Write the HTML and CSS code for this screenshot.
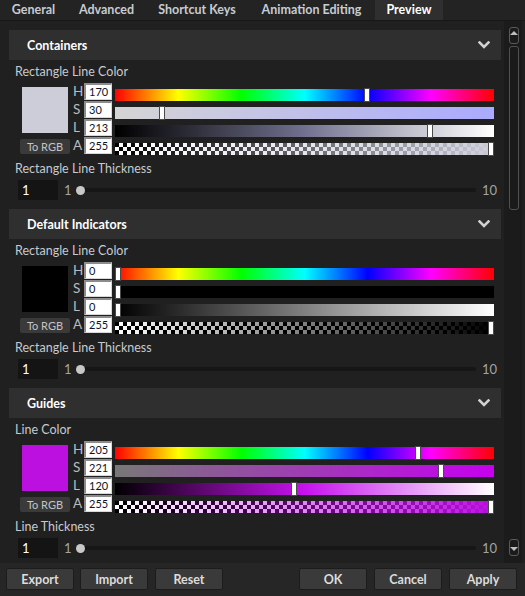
FILE: index.html
```html
<!DOCTYPE html>
<html>
<head>
<meta charset="utf-8">
<title>Preferences - Preview</title>
<link rel="stylesheet" href="styles.css">
</head>
<body>
<div class="window">
  <nav class="tabs">
    <div class="tab">General</div>
    <div class="tab">Advanced</div>
    <div class="tab">Shortcut Keys</div>
    <div class="tab">Animation Editing</div>
    <div class="tab active">Preview</div>
  </nav>
  <div class="main">
    <div class="content">
      <section class="section sec-containers">
        <header class="sec-head"><span>Containers</span><svg class="chev" viewBox="0 0 12 8" width="12" height="8"><polyline points="1.5,1.5 6,6 10.5,1.5"/></svg></header>
        <div class="sec-body">
          <div class="field-label">Rectangle Line Color</div>
          <div class="picker">
            <div class="preview-col">
              <div class="swatch"></div>
              <button class="to-rgb">To RGB</button>
            </div>
            <div class="channels">
              <div class="channel"><span class="ch-letter">H</span><span class="ch-input">170</span><div class="bar bar-h"><span class="thumb" style="left:248.7px"></span></div></div>
              <div class="channel"><span class="ch-letter">S</span><span class="ch-input">30</span><div class="bar bar-s"><span class="thumb" style="left:43.9px"></span></div></div>
              <div class="channel"><span class="ch-letter">L</span><span class="ch-input">213</span><div class="bar bar-l"><span class="thumb" style="left:311.6px"></span></div></div>
              <div class="channel"><span class="ch-letter">A</span><span class="ch-input">255</span><div class="bar bar-a"><span class="thumb" style="left:373px"></span></div></div>
            </div>
          </div>
          <div class="field-label gap">Rectangle Line Thickness</div>
          <div class="thickness">
            <div class="num-input">1</div>
            <span class="range-min">1</span>
            <div class="track"><span class="knob"></span></div>
            <span class="range-max">10</span>
          </div>
        </div>
      </section>

      <section class="section sec-indicators">
        <header class="sec-head"><span>Default Indicators</span><svg class="chev" viewBox="0 0 12 8" width="12" height="8"><polyline points="1.5,1.5 6,6 10.5,1.5"/></svg></header>
        <div class="sec-body">
          <div class="field-label">Rectangle Line Color</div>
          <div class="picker">
            <div class="preview-col">
              <div class="swatch"></div>
              <button class="to-rgb">To RGB</button>
            </div>
            <div class="channels">
              <div class="channel"><span class="ch-letter">H</span><span class="ch-input">0</span><div class="bar bar-h"><span class="thumb" style="left:0px"></span></div></div>
              <div class="channel"><span class="ch-letter">S</span><span class="ch-input">0</span><div class="bar bar-s"><span class="thumb" style="left:0px"></span></div></div>
              <div class="channel"><span class="ch-letter">L</span><span class="ch-input">0</span><div class="bar bar-l"><span class="thumb" style="left:0px"></span></div></div>
              <div class="channel"><span class="ch-letter">A</span><span class="ch-input">255</span><div class="bar bar-a"><span class="thumb" style="left:373px"></span></div></div>
            </div>
          </div>
          <div class="field-label gap">Rectangle Line Thickness</div>
          <div class="thickness">
            <div class="num-input">1</div>
            <span class="range-min">1</span>
            <div class="track"><span class="knob"></span></div>
            <span class="range-max">10</span>
          </div>
        </div>
      </section>

      <section class="section sec-guides">
        <header class="sec-head"><span>Guides</span><svg class="chev" viewBox="0 0 12 8" width="12" height="8"><polyline points="1.5,1.5 6,6 10.5,1.5"/></svg></header>
        <div class="sec-body">
          <div class="field-label">Line Color</div>
          <div class="picker">
            <div class="preview-col">
              <div class="swatch"></div>
              <button class="to-rgb">To RGB</button>
            </div>
            <div class="channels">
              <div class="channel"><span class="ch-letter">H</span><span class="ch-input">205</span><div class="bar bar-h"><span class="thumb" style="left:299.9px"></span></div></div>
              <div class="channel"><span class="ch-letter">S</span><span class="ch-input">221</span><div class="bar bar-s"><span class="thumb" style="left:323.3px"></span></div></div>
              <div class="channel"><span class="ch-letter">L</span><span class="ch-input">120</span><div class="bar bar-l"><span class="thumb" style="left:175.5px"></span></div></div>
              <div class="channel"><span class="ch-letter">A</span><span class="ch-input">255</span><div class="bar bar-a"><span class="thumb" style="left:373px"></span></div></div>
            </div>
          </div>
          <div class="field-label gap">Line Thickness</div>
          <div class="thickness">
            <div class="num-input">1</div>
            <span class="range-min">1</span>
            <div class="track"><span class="knob"></span></div>
            <span class="range-max">10</span>
          </div>
        </div>
      </section>
    </div>
    <div class="scrollbar">
      <div class="sb-btn sb-up"><svg viewBox="0 0 8 6" width="8" height="6"><polygon points="0,5 4,1 8,5"/></svg></div>
      <div class="sb-thumb"></div>
      <div class="sb-fill"></div>
      <div class="sb-btn sb-down"><svg viewBox="0 0 8 6" width="8" height="6"><polygon points="0,1 4,5 8,1"/></svg></div>
    </div>
  </div>
  <footer class="footer">
    <button class="btn">Export</button>
    <button class="btn">Import</button>
    <button class="btn">Reset</button>
    <div class="spacer"></div>
    <button class="btn">OK</button>
    <button class="btn">Cancel</button>
    <button class="btn">Apply</button>
  </footer>
</div>
</body>
</html>
```
FILE: styles.css
```css
* { box-sizing: border-box; margin: 0; padding: 0; }
html, body { width: 525px; height: 596px; overflow: hidden; background: #202020; }
body { font-family: Lato, "Noto Sans", sans-serif; font-size: 12.5px; color: #c8ccd0; }

.window { display: flex; flex-direction: column; height: 596px; }

/* Tabs */
.tabs { display: flex; flex: none; height: 21px; background: #232323; border-bottom: 1px solid #171717; }
.tab { height: 20px; line-height: 20px; text-align: center; font-weight: 700; color: #c6ccd2; font-size: 12.5px; }
.tab:nth-child(1) { width: 67px; }
.tab:nth-child(2) { width: 79px; }
.tab:nth-child(3) { width: 102px; }
.tab:nth-child(4) { width: 127px; }
.tab:nth-child(5) { width: 68px; }
.tab.active { background: #2f2f2f; color: #ffffff; }

/* Main */
.main { flex: 1; display: flex; min-height: 0; }
.content { width: 504px; overflow: hidden; padding: 9px 3px 0 9px; }
.section { display: flex; flex-direction: column; }
.sec-head { height: 30px; flex: none; background: #2f2f2f; display: flex; align-items: center; justify-content: space-between; padding: 0 11px 0 18px; font-weight: 700; color: #ffffff; font-size: 12.5px; }
.chev polyline { fill: none; stroke: #d2d2d2; stroke-width: 2.6; stroke-linecap: square; }
.sec-body { padding: 0 7px 9px 6px; }

.field-label { height: 16px; line-height: 16px; margin-top: 4px; color: #c6cacf; }
.field-label.gap { margin-top: 6px; }

/* Color picker */
.picker { display: flex; margin-top: 3px; height: 72px; }
.preview-col { width: 50px; margin-left: 5px; display: flex; flex-direction: column; }
.swatch { width: 46px; height: 46px; margin: 4px 0 0 2px; }
.to-rgb { margin-top: 6px; width: 50px; height: 15px; border: none; border-radius: 2px; background: #3a3a3a; color: #c4c4c4; font-family: inherit; font-size: 11px; line-height: 15px; }
.channels { margin-left: 3px; display: flex; flex-direction: column; }
.channel { display: flex; align-items: flex-start; height: 18px; }
.ch-letter { width: 11px; font-size: 13.5px; line-height: 17px; color: #b8bcc0; }
.ch-input { width: 28px; height: 17px; background: #ffffff; border-style: solid; border-width: 2px 1px 1px 2px; border-color: #8c8c8c #d8d8d8 #d8d8d8 #8c8c8c; padding-left: 3px; font-size: 11px; line-height: 14px; color: #0c1428; }
.bar { position: relative; width: 379px; height: 12px; margin: 6px 0 0 3px; }
.thumb { position: absolute; top: -1px; width: 6px; height: 14px; background: #ffffff; border: 1px solid #4a4a4a; }

.bar-h { background: linear-gradient(to right, #f00, #ff0, #0f0, #0ff, #00f, #f0f, #f00); }

.sec-containers .swatch { background: #cdcdda; }
.sec-containers .bar-s { background: linear-gradient(to right, #d5d5d5, #aaaaff); }
.sec-containers .bar-l { background: linear-gradient(to right, #000000, #71718f, #ffffff); }
.sec-containers .bar-a { background: linear-gradient(to right, rgba(205,205,218,0), #cdcdda), repeating-conic-gradient(#ffffff 0 25%, #000000 0 50%) 0 0 / 8px 8px; }

.sec-indicators .swatch { background: #000000; }
.sec-indicators .bar-s { background: #000000; }
.sec-indicators .bar-l { background: linear-gradient(to right, #000000, #808080, #ffffff); }
.sec-indicators .bar-a { background: linear-gradient(to right, rgba(0,0,0,0), #000000), repeating-conic-gradient(#ffffff 0 25%, #000000 0 50%) 0 0 / 8px 8px; }

.sec-guides .swatch { background: #bb10e0; }
.sec-guides .bar-s { background: linear-gradient(to right, #787878, #c600f0); }
.sec-guides .bar-l { background: linear-gradient(to right, #000000, #c711ee, #ffffff); }
.sec-guides .bar-a { background: linear-gradient(to right, rgba(187,16,224,0), #bb10e0), repeating-conic-gradient(#ffffff 0 25%, #000000 0 50%) 0 0 / 8px 8px; }

/* Thickness slider */
.thickness { display: flex; align-items: center; height: 20px; margin-top: 3px; padding-left: 3px; }
.num-input { width: 40px; height: 20px; background: #141414; color: #ffffff; font-size: 13px; line-height: 20px; padding-left: 4px; }
.range-min { margin-left: 6px; font-size: 13px; color: #a4a4a4; }
.track { position: relative; flex: 1; height: 9px; margin-left: 4px; }
.track::before { content: ""; position: absolute; left: 4px; right: 0; top: 2.5px; height: 4px; border-radius: 2px; background: #161616; }
.knob { position: absolute; left: 0; top: 0; width: 9px; height: 9px; border-radius: 50%; background: #c8c8c8; }
.range-max { margin-left: 6px; margin-right: -3px; font-size: 13px; color: #a4a4a4; }

/* Scrollbar */
.scrollbar { width: 18px; flex: none; background: #1b1b1b; display: flex; flex-direction: column; padding: 6px 0 7px 5px; }
.sb-btn { width: 10px; height: 17px; border: 1px solid #5a5a5a; border-radius: 3px; display: flex; justify-content: center; }
.sb-up { align-items: flex-start; padding-top: 2px; }
.sb-down { align-items: flex-end; padding-bottom: 3px; }
.sb-btn polygon { fill: #bdbdbd; }
.sb-thumb { width: 10px; height: 164px; margin-top: 2px; border: 1px solid #505050; border-radius: 3px; background: #1a1a1a; }
.sb-fill { flex: 1; }

/* Footer */
.footer { flex: none; height: 33px; background: #262626; display: flex; padding: 5px 8px 6px 6px; }
.btn { width: 68px; height: 22px; margin-left: 7px; border: 1px solid #1c1c1c; border-radius: 2px; background: #3a3a3a; color: #dcdcdc; font-family: inherit; font-size: 12.5px; font-weight: 700; }
.btn:first-child { margin-left: 0; }
.btn:nth-child(2) { margin-left: 6px; }
.spacer { flex: 1; }
.spacer + .btn { margin-left: 0; }
```
